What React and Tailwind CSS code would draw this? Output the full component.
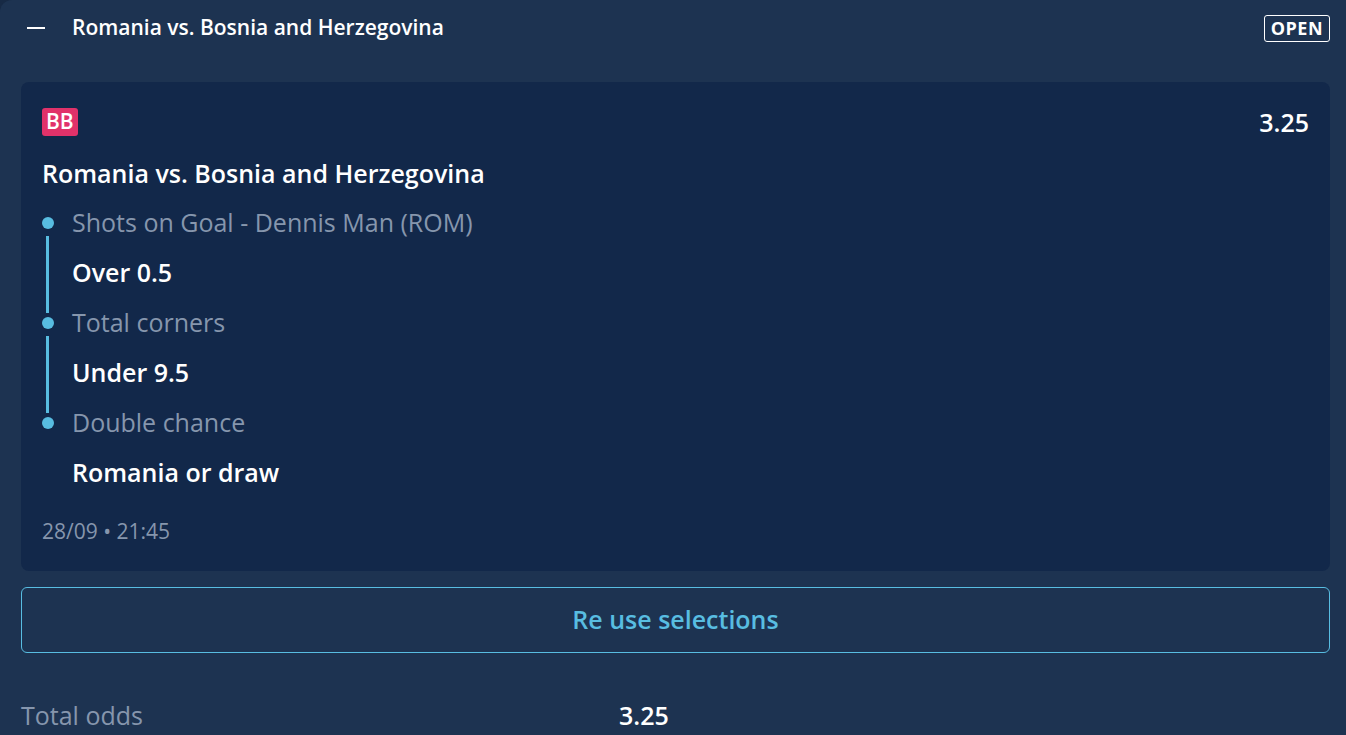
import React from 'react';

const selections = [
    { market: 'Shots on Goal - Dennis Man (ROM)', pick: 'Over 0.5' },
    { market: 'Total corners', pick: 'Under 9.5' },
    { market: 'Double chance', pick: 'Romania or draw' },
];

export default function App() {
    return (
        <div className="min-h-screen bg-[#172a45] font-['Open_Sans',sans-serif]">
            <div className="min-h-screen bg-[#1d3351] rounded-tl-xl pl-[21px] pr-[16px]">
                {/* header */}
                <div className="flex items-center h-[56px]">
                    <div className="w-[18px] h-[2px] bg-white ml-[6px]"></div>
                    <h1 className="ml-[27px] text-[21px] font-semibold text-white">Romania vs. Bosnia and Herzegovina</h1>
                    <span className="ml-auto border border-white rounded-[3px] px-[6px] h-[27px] flex items-center text-[18px] font-bold text-white tracking-wide">OPEN</span>
                </div>

                {/* bet card */}
                <div className="mt-[26px] bg-[#12284a] rounded-lg pl-[21px] pr-[21px] pt-[26px] pb-[26px]">
                    <div className="flex items-center justify-between h-[28px]">
                        <span className="bg-[#e1326a] text-white text-[21px] font-semibold rounded-[3px] px-[4px] h-[28px] flex items-center">BB</span>
                        <span className="text-white text-[25px] leading-[32px] font-semibold">3.25</span>
                    </div>
                    <p className="mt-[21px] text-white text-[25px] leading-[32px] font-semibold">Romania vs. Bosnia and Herzegovina</p>
                    <ul className="mt-[9px]">
                        {selections.map((s, i) => (
                            <li key={i}>
                                <div className="flex items-center h-[50px]">
                                    <div className="w-[30px] h-full relative flex items-center">
                                        <div className="w-[12px] h-[12px] rounded-full bg-[#58bde1]"></div>
                                    </div>
                                    <span className="text-[25px] text-[#8696ad]">{s.market}</span>
                                </div>
                                <div className="flex items-center h-[50px]">
                                    <div className="w-[30px] h-full relative">
                                        {i < selections.length - 1 && (
                                            <div className="absolute left-[4px] w-[3px] top-[-12px] bottom-[-15px] bg-[#58bde1]"></div>
                                        )}
                                    </div>
                                    <span className="text-[25px] font-semibold text-white">{s.pick}</span>
                                </div>
                            </li>
                        ))}
                    </ul>
                    <p className="mt-[19px] text-[21px] leading-[28px] text-[#8696ad]">28/09 • 21:45</p>
                </div>

                {/* re use */}
                <button className="mt-[16px] w-full h-[66px] border border-[#58bde1] rounded-md text-[25px] font-semibold text-[#58bde1]">
                    Re use selections
                </button>

                {/* total odds */}
                <div className="mt-[46px] flex items-center leading-[32px]">
                    <span className="w-[598px] text-[25px] text-[#8696ad]">Total odds</span>
                    <span className="text-[25px] font-semibold text-white">3.25</span>
                </div>
            </div>
        </div>
    );
}
